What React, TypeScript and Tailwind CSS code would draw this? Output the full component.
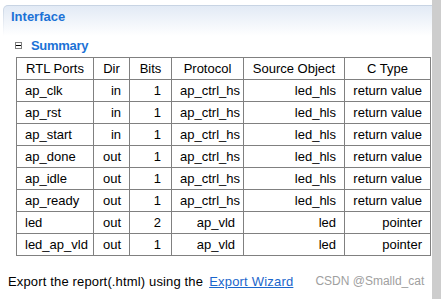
import React from "react";

interface PortRow {
  name: string;
  dir: string;
  bits: number;
  protocol: string;
  source: string;
  ctype: string;
}

const rows: PortRow[] = [
  { name: "ap_clk", dir: "in", bits: 1, protocol: "ap_ctrl_hs", source: "led_hls", ctype: "return value" },
  { name: "ap_rst", dir: "in", bits: 1, protocol: "ap_ctrl_hs", source: "led_hls", ctype: "return value" },
  { name: "ap_start", dir: "in", bits: 1, protocol: "ap_ctrl_hs", source: "led_hls", ctype: "return value" },
  { name: "ap_done", dir: "out", bits: 1, protocol: "ap_ctrl_hs", source: "led_hls", ctype: "return value" },
  { name: "ap_idle", dir: "out", bits: 1, protocol: "ap_ctrl_hs", source: "led_hls", ctype: "return value" },
  { name: "ap_ready", dir: "out", bits: 1, protocol: "ap_ctrl_hs", source: "led_hls", ctype: "return value" },
  { name: "led", dir: "out", bits: 2, protocol: "ap_vld", source: "led", ctype: "pointer" },
  { name: "led_ap_vld", dir: "out", bits: 1, protocol: "ap_vld", source: "led", ctype: "pointer" },
];

const headers = ["RTL Ports", "Dir", "Bits", "Protocol", "Source Object", "C Type"];
const widths = ["w-[77px]", "w-[36px]", "w-[42px]", "w-[72px]", "w-[101px]", "w-[86px]"];

const cell = "border border-[#808080] h-[22px] px-2 py-0 whitespace-nowrap leading-none";

export default function App() {
  return (
    <div
      className="flex w-[441px] h-[299px] bg-white text-black overflow-hidden"
      style={{ fontFamily: '"Liberation Sans", Arial, sans-serif' }}
    >
      <div className="w-[432px] flex flex-col">
        {/* section header */}
        <div className="mt-[5px] ml-[3px] rounded-tl-[5px] pl-px pt-px bg-gradient-to-b from-[#c7d3e3] to-white">
          <div className="h-[30px] rounded-tl-[4px] bg-gradient-to-b from-[#e2eaf5] to-white px-[7px] leading-[20px]">
            <span className="text-[13px] font-bold text-[#1c72d6]">Interface</span>
          </div>
        </div>

        {/* summary title */}
        <div className="flex items-center ml-[15px] gap-[9px]">
          <div className="w-[7px] h-[7px] border border-[#808080] flex items-center justify-center">
            <div className="w-[5px] h-px bg-black" />
          </div>
          <span className="text-[13px] font-bold text-[#1c72d6] tracking-[-0.3px]">Summary</span>
        </div>

        <table className="ml-[16px] mt-[1px] border-collapse text-[13px] table-fixed w-[414px]">
          <thead>
            <tr>
              {headers.map((h, i) => (
                <th key={h} className={`${cell} ${widths[i]} font-normal text-center`}>
                  {h}
                </th>
              ))}
            </tr>
          </thead>
          <tbody>
            {rows.map((r) => (
              <tr key={r.name}>
                <td className={`${cell} text-left`}>{r.name}</td>
                <td className={`${cell} text-right`}>{r.dir}</td>
                <td className={`${cell} text-right pr-[10px]`}>{r.bits}</td>
                <td className={`${cell} text-right`}>{r.protocol}</td>
                <td className={`${cell} text-right`}>{r.source}</td>
                <td className={`${cell} text-right`}>{r.ctype}</td>
              </tr>
            ))}
          </tbody>
        </table>

        <div className="flex items-center mt-[16px] ml-[8px] text-[13px]">
          <span className="tracking-[0.15px]">Export the report(.html) using the</span>
          <a className="ml-[6px] text-[#1a66cc] underline tracking-[0.2px]">Export Wizard</a>
          <span className="ml-[22px] text-[12px] text-[#a0a0a0]">CSDN @Smalld_cat</span>
        </div>
      </div>
      <div className="w-[9px] h-full bg-[#cdcdcd]" />
    </div>
  );
}
